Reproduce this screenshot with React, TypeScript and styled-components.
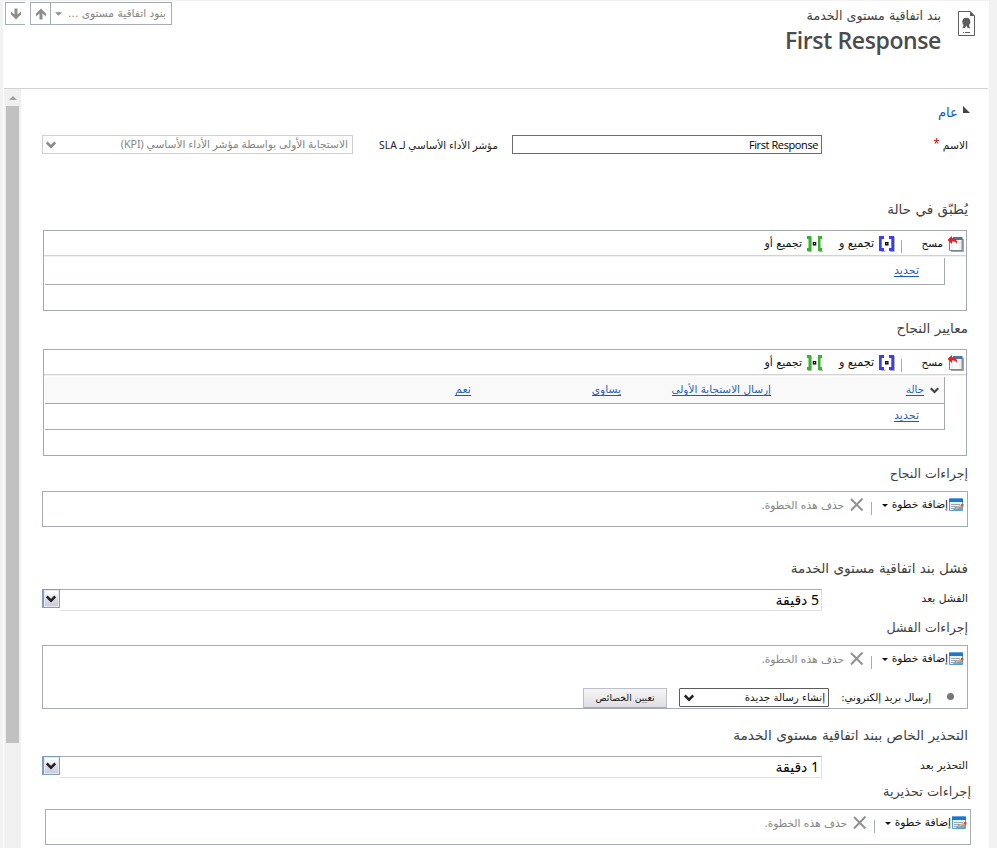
import React from 'react';
import styled, { createGlobalStyle } from 'styled-components';

const Global = createGlobalStyle`
  * { box-sizing: border-box; }
  body { margin: 0; background: #f2f2f2; font-family: "DejaVu Sans", sans-serif; overflow: hidden; }
`;

const Page = styled.div`
  width: 997px; height: 848px; padding: 1px 8px 0 3px; overflow: hidden; background: #f2f2f2;
`;
const Panel = styled.div`
  height: 847px; display: flex; flex-direction: column; background: #fff;
  padding-left: 1px;
`;
const Header = styled.header`
  height: 88px; flex: none; display: flex; justify-content: space-between;
  border-bottom: 1px solid #d3d3d3; padding: 1px 13px 0 1px; margin-right: 1px;
`;
const Nav = styled.div`display: flex; height: 23px; gap: 5px;`;
const NavButton = styled.div`
  width: 20px; height: 23px; border: 1px solid #a5acb8; border-right: 0;
  display: flex; align-items: center; justify-content: center;
`;
const NavGroup = styled.div`display: flex; width: 142px; border: 1px solid #a5acb8;`;
const NavUp = styled.div`
  width: 20px; border-right: 1px solid #a5acb8; display: flex; align-items: center; justify-content: center;
`;
const NavPicker = styled.div`
  flex: 1; display: flex; align-items: center; justify-content: space-between; padding: 0 5px 0 4px;
`;
const Identity = styled.div`display: flex; direction: rtl; padding-top: 5px; gap: 17px;`;
const Titles = styled.div`display: flex; flex-direction: column; width: 170px;`;
const RecordType = styled.div`font-size: 12.7px; line-height: 18px; height: 18px; color: #444; white-space: nowrap;`;
const RecordName = styled.div`
  font: 600 23px/30px "Open Sans", sans-serif; letter-spacing: -0.38px; color: #4c4c4c;
  white-space: nowrap; direction: ltr; text-align: right;
`;
const IconSlot = styled.div`padding-top: 4px;`;

const Body = styled.div`flex: 1; display: flex; min-height: 0;`;
const Scroll = styled.div`width: 17px; background: #f0f0f0; padding: 0 2px;`;
const ScrollArrow = styled.div`height: 17px; display: flex; align-items: center; justify-content: center;`;
const Thumb = styled.div`height: 637px; background: #c1c1c1;`;
const Form = styled.main`flex: 1; direction: rtl; display: flex; flex-direction: column;`;

const Text = styled.span<{ $s: number; $w?: number; $c?: string; $latin?: boolean; $up?: number }>`
  font-size: ${p => p.$s}px; line-height: 18px; color: ${p => p.$c ?? '#111'};
  width: ${p => (p.$w ? `${p.$w}px` : 'auto')}; flex: none; white-space: nowrap;
  ${p => p.$latin && 'font-family: "Noto Sans", "DejaVu Sans", sans-serif;'}
  ${p => p.$up && `margin-bottom: ${p.$up}px;`}
`;
const Link = styled.a<{ $s: number; $w: number; $gap: number }>`
  font-size: ${p => p.$s}px; width: ${p => p.$w}px; margin-right: ${p => p.$gap}px; flex: none;
  line-height: 13px; height: 13px; margin-top: -2px; color: #2a64b8; white-space: nowrap;
  border-bottom: 1px solid #1160b7;
`;
const Tab = styled.div`
  height: 46px; display: flex; align-items: center; padding: 2px 19px 0 0; gap: 5px;
`;
const TabMark = styled.div`height: 16px; display: flex;`;
const Heading = styled.h2<{ $before: number; $after: number; $s: number; $r?: number }>`
  margin: ${p => p.$before}px ${p => p.$r ?? 21}px ${p => p.$after}px 0;
  height: 24px; flex: none; font-size: ${p => p.$s}px; line-height: 24px; font-weight: 400; color: #424242;
`;
const FieldRow = styled.div<{ $h: number }>`
  height: ${p => p.$h}px; flex: none; display: flex; align-items: center; padding-right: 21px;
`;
const FieldLabel = styled.label<{ $w: number; $s: number; $latin?: boolean; $up?: number }>`
  width: ${p => p.$w}px; flex: none; font-size: ${p => p.$s}px; color: #222; white-space: nowrap;
  display: flex; gap: 3px; margin-bottom: ${p => p.$up ?? 0}px;
  ${p => p.$latin && 'font-family: "Noto Sans", "DejaVu Sans", sans-serif;'}
`;
const Required = styled.span`color: #c00000; font-family: "Open Sans"; font-size: 12px; line-height: 10px;`;
const NameBox = styled.div`
  width: 310px; height: 19px; border: 1px solid #6d6d6d; margin: 0 0 1px 14px; padding: 0 3px;
  font: 11px/18px "Open Sans", sans-serif; letter-spacing: -0.4px; color: #000; direction: ltr; text-align: right;
`;
const KpiSelect = styled.div`
  width: 311px; height: 19px; border: 1px solid #d0d0d0; padding: 0 4px 0 3px; margin-bottom: 1px;
  display: flex; align-items: center; justify-content: space-between;
`;
const DurationBox = styled.div`
  width: 762px; height: 22px; border: 1px solid #e0e0e8; border-top-color: #a8a8b0; border-left: 0;
  padding-right: 2px; display: flex; align-items: center;
`;
const DropButton = styled.div`
  width: 18px; height: 19px; align-self: flex-start; border: 1px solid #7d9fbe; border-left-width: 2px;
  border-right-color: #9a9aa8; background: linear-gradient(#fff 10%, #dcdce8 55%, #c9c9dc);
  box-shadow: inset 0 0 0 1px #e8e8ee; display: flex; align-items: center; justify-content: center;
  padding-right: 1px;
`;

const ConditionBox = styled.section<{ $h: number }>`
  width: 924px; height: ${p => p.$h}px; flex: none; margin-right: 22px; border: 1px solid #a5a8b5;
`;
const ConditionBar = styled.div`
  height: 25px; display: flex; align-items: center; padding: 1px 2px 0 0;
  border-bottom: 1px solid #d3d3d3; box-shadow: 0 1px 0 #efefef; margin-bottom: 2px;
`;
const Gap = styled.i<{ $w: number }>`width: ${p => p.$w}px; flex: none;`;
const Divider = styled.i`width: 1px; height: 13px; background: #a5acb8; margin-top: 6px; flex: none;`;
const Clauses = styled.div`
  width: 900px; margin-right: 21px; border-right: 1px solid #a5a8b5;
`;
const Clause = styled.div<{ $h: number; $filled?: boolean }>`
  height: ${p => p.$h}px; display: flex; align-items: center; border-bottom: 1px solid #a5a8b5;
  background: ${p => (p.$filled ? '#f9f9f9' : '#fff')};
`;

const StepBox = styled.section<{ $h: number; $r?: number }>`
  width: 926px; height: ${p => p.$h}px; flex: none; margin-right: ${p => p.$r ?? 21}px; border: 1px solid #a5acb5;
`;
const StepBar = styled.div`height: 26px; display: flex; align-items: center; padding-right: 3px;`;
const StepRow = styled.div`height: 20px; margin-top: 16px; display: flex; align-items: center; padding-right: 13px;`;
const Bullet = styled.i`
  width: 7px; height: 7px; border-radius: 50%; background: #777; margin: 0 0 3px 16px; flex: none;
`;
const ActionSelect = styled.div`
  width: 150px; height: 19px; border: 1px solid #5c5c5c; border-radius: 1px; margin: 0 12px 1px 12px; padding: 0 3px 0 4px;
  display: flex; align-items: center; justify-content: space-between;
`;
const ActionButton = styled.div`
  width: 84px; height: 20px; border: 1px solid #bcc0c6; border-bottom-color: #a5acb5;
  background: linear-gradient(#f6f6f6, #dedee2); font-size: 9.3px; line-height: 17px; text-align: center;
  color: #111; white-space: nowrap;
`;

const Chevron = ({ color = '#222', w = 9 }: { color?: string; w?: number }) => (
  <svg width={w} height={w} viewBox="0 0 9 9"><path d="M.7 2.2 4.5 6 8.3 2.2" fill="none" stroke={color} strokeWidth="2.2" /></svg>
);
const Arrow = ({ down }: { down?: boolean }) => (
  <svg width="12" height="12" viewBox="0 0 12 12">
    <path transform={down ? 'rotate(180 6 6)' : undefined} d="M6 .5 11 5.5V8.5L7.5 5.5V11.5H4.5V5.5L1 8.5V5.5Z" fill="#8e8e8e" />
  </svg>
);
const Caret = ({ w, h, color, up }: { w: number; h: number; color: string; up?: boolean }) => (
  <svg width={w} height={h} viewBox="0 0 8 4"><path d={up ? 'M0 4 4 0 8 4Z' : 'M0 0H8L4 4Z'} fill={color} /></svg>
);
const Certificate = () => (
  <svg width="17" height="25" viewBox="0 0 17 25">
    <path d="M.5.5H12L16.5 5V24.5H.5Z" fill="#fff" stroke="#5d5d5d" />
    <path d="M12 0 17 5H12Z" fill="#5d5d5d" />
    <circle cx="8.3" cy="10.8" r="4" fill="#5d5d5d" />
    <path d="M6 13 4.5 17.3 7 17 8.3 14.5 9.7 17 12 17.3 10.7 13Z" fill="#5d5d5d" />
    <path d="M5 21.5h1M7 21.5h5" stroke="#5d5d5d" />
  </svg>
);
const ClearIcon = () => (
  <svg width="16" height="16" viewBox="0 0 16 16">
    <path d="M3 3H16V16H3Z" fill="#a8a49c" />
    <path d="M1.5 2.5H14V14.5H1.5Z" fill="#fff" stroke="#76859c" />
    <path d="M5 1H14.5V4H5Z" fill="#4f70ac" />
    <path d="M4 6V14M12 6V14M2 6H13" stroke="#dde1e8" />
    <path d="M-.5 4 4 0V2.5C8 2.5 9.5 4.5 9 8 8 6 7 5.5 4 5.5V8Z" fill="#e32222" />
  </svg>
);
const GroupAndIcon = () => (
  <svg width="16" height="16" viewBox="0 0 16 16">
    <path d="M2 13.5V15.5H6V14M11 15.5H15.5V1" fill="none" stroke="#b4b4b4" />
    <path d="M0 0H5V3H2.7V12H5V15H0ZM10 0H15V15H10V12H12.3V3H10Z" fill="#3d3df0" />
    <path d="M6.7 6.7h2.2v2.2H6.7Z" fill="#fff" stroke="#000" strokeWidth="1.3" />
  </svg>
);
const GroupOrIcon = () => (
  <svg width="16" height="16" viewBox="0 0 16 16">
    <path d="M1 15.5H4.500V1M12 15.5H16" fill="none" stroke="#b4b4b4" />
    <path d="M0 0H4V15H0V12H1.5V3H0ZM11 0H15V3H13.5V12H15V15H11Z" fill="#35b32b" />
    <path d="M6.4 6.7h2.2v2.2H6.4Z" fill="#fff" stroke="#000" strokeWidth="1.3" />
  </svg>
);
const StepIcon = () => (
  <svg width="15" height="14" viewBox="0 0 15 14">
    <path d="M.5 1H13.5V12.5H.5Z" fill="#e8f1f9" stroke="#5b9bd5" />
    <path d="M0 .5H14V4H0Z" fill="#1b78d0" />
    <path d="M2 6.5H11M2 8.5H8M2 10.5H5" stroke="#9aa5b0" />
    <path d="m4 12 2-3 5-1 2.5 1.5V12Z" fill="#72a5d2" />
    <path d="m7 10.5 5-3" stroke="#e5b26a" strokeWidth="1.5" />
    <path d="M12 6h2.5v2.5H12Z" fill="#d45430" />
  </svg>
);
const DeleteIcon = () => (
  <svg width="14" height="14" viewBox="0 0 14 14">
    <path d="M1 1 12.5 12.5M12.5 .5 1 12.5" fill="none" stroke="#929292" strokeWidth="2" />
  </svg>
);

const ConditionToolbar = () => (
  <ConditionBar>
    <ClearIcon /><Gap $w={5} /><Text $s={10.4} $w={21} $up={1}>مسح</Text><Gap $w={20} />
    <Divider /><Gap $w={6} />
    <GroupAndIcon /><Gap $w={5} /><Text $s={11.2} $w={35}>تجميع و</Text><Gap $w={16} />
    <GroupOrIcon /><Gap $w={5} /><Text $s={11} $w={38}>تجميع أو</Text>
  </ConditionBar>
);
const StepToolbar = () => (
  <StepBar>
    <StepIcon /><Gap $w={1} /><Text $s={10.75} $w={57}>إضافة خطوة</Text><Gap $w={3} />
    <Caret w={6} h={3} color="#111" /><Gap $w={10} />
    <Divider /><Gap $w={7} />
    <DeleteIcon /><Gap $w={6} /><Text $s={10.6} $w={83} $c="#868686" $up={1}>حذف هذه الخطوة.</Text>
  </StepBar>
);
const Duration = ({ label, value, size }: { label: string; value: string; size: number }) => (
  <FieldRow $h={22}>
    <FieldLabel $w={146} $s={size} $up={3}>{label}</FieldLabel>
    <DurationBox><Text $s={14} $c="#000" $latin>{value}</Text></DurationBox>
    <DropButton><Chevron w={10} /></DropButton>
  </FieldRow>
);

export default function App() {
  return (
    <Page>
      <Global />
      <Panel>
        <Header>
          <Nav>
            <NavButton><Arrow down /></NavButton>
            <NavGroup>
              <NavUp><Arrow /></NavUp>
              <NavPicker>
                <Caret w={7} h={4} color="#8c8c8c" />
                <Text $s={10.7} $c="#868686" dir="rtl">بنود اتفاقية مستوى ...</Text>
              </NavPicker>
            </NavGroup>
          </Nav>
          <Identity>
            <IconSlot><Certificate /></IconSlot>
            <Titles>
              <RecordType>بند اتفاقية مستوى الخدمة</RecordType>
              <RecordName>First Response</RecordName>
            </Titles>
          </Identity>
        </Header>
        <Body>
          <Scroll>
            <ScrollArrow><Caret w={8} h={4} color="#a0a0a0" up /></ScrollArrow>
            <Thumb />
          </Scroll>
          <Form>
            <Tab>
              <TabMark><svg width="7" height="12" viewBox="0 0 7 12"><path d="M0 1 7 8H0Z" fill="#444" /></svg></TabMark>
              <Text $s={13.2} $c="#1160b7">عام</Text>
            </Tab>
            <FieldRow $h={20}>
              <FieldLabel $w={146} $s={10.7}>الاسم<Required>*</Required></FieldLabel>
              <NameBox>First Response</NameBox>
              <FieldLabel $w={145} $s={10.35} $latin $up={1}>مؤشر الأداء الأساسي لـ SLA</FieldLabel>
              <KpiSelect>
                <Text $s={10.65} $c="#868686" $latin $up={1}>الاستجابة الأولى بواسطة مؤشر الأداء الأساسي (KPI)</Text>
                <Chevron color="#888" w={10} />
              </KpiSelect>
            </FieldRow>

            <Heading $before={42} $after={9} $s={13.6}>يُطبّق في حالة</Heading>
            <ConditionBox $h={81}>
              <ConditionToolbar />
              <Clauses>
                <Clause $h={27}><Link $s={11.1} $w={25} $gap={25}>تحديد</Link></Clause>
              </Clauses>
            </ConditionBox>

            <Heading $before={5} $after={9} $s={13.6}>معايير النجاح</Heading>
            <ConditionBox $h={107}>
              <ConditionToolbar />
              <Clauses>
                <Clause $h={27} $filled>
                  <Gap $w={5} /><Chevron color="#444" />
                  <Link $s={10.2} $w={18} $gap={6}>حالة</Link>
                  <Link $s={10.5} $w={99} $gap={135}>إرسال الاستجابة الأولى</Link>
                  <Link $s={10.7} $w={29} $gap={51}>يساوى</Link>
                  <Link $s={11.2} $w={16} $gap={121}>نعم</Link>
                </Clause>
                <Clause $h={26}><Link $s={11.1} $w={25} $gap={25}>تحديد</Link></Clause>
              </Clauses>
            </ConditionBox>

            <Heading $before={6} $after={5} $s={12.6}>إجراءات النجاح</Heading>
            <StepBox $h={36}><StepToolbar /></StepBox>

            <Heading $before={29} $after={9} $s={13.6}>فشل بند اتفاقية مستوى الخدمة</Heading>
            <Duration label="الفشل بعد" value="5 دقيقة" size={10.7} />

            <Heading $before={5} $after={5} $s={12.6}>إجراءات الفشل</Heading>
            <StepBox $h={64}>
              <StepToolbar />
              <StepRow>
                <Bullet />
                <Text $s={10.2} $w={90}>إرسال بريد إلكتروني:</Text>
                <Gap $w={-1} />
                <ActionSelect><Text $s={10.3} $up={1}>إنشاء رسالة جديدة</Text><Chevron w={10} /></ActionSelect>
                <ActionButton>تعيين الخصائص</ActionButton>
              </StepRow>
            </StepBox>

            <Heading $before={14} $after={9} $s={13.7}>التحذير الخاص ببند اتفاقية مستوى الخدمة</Heading>
            <Duration label="التحذير بعد" value="1 دقيقة" size={10.7} />

            <Heading $before={2} $after={5} $s={12.9} $r={18}>إجراءات تحذيرية</Heading>
            <StepBox $h={36} $r={18}><StepToolbar /></StepBox>
          </Form>
        </Body>
      </Panel>
    </Page>
  );
}
